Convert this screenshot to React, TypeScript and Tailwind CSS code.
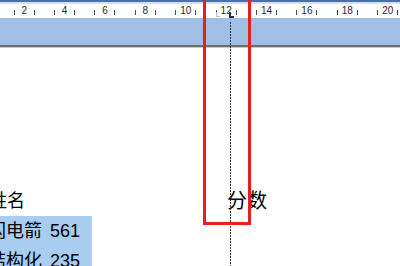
import React from 'react';

const labels = [2, 4, 6, 8, 10, 12, 14, 16, 18, 20];

const Tick: React.FC = () => <span className="mt-[2px] h-[5px] w-px bg-[#4a4a4a]" />;

const Ruler: React.FC = () => {
  return (
    <div className="relative flex h-[14px] items-center bg-white pl-[4px]">
      {labels.map((n) => (
        <div key={n} className="flex w-[40.4px] shrink-0 items-center justify-center">
          <Tick />
          <span className="w-[19px] text-center text-[10px] leading-[12px] text-[#2a2a2a]">{n}</span>
          <Tick />
        </div>
      ))}
      {/* tab markers */}
      <span className="absolute left-[216px] top-[8px] h-[5px] w-[4px] border-b border-l border-[#b8c4d4]" />
      <span className="absolute left-[229px] top-[8px] h-[6px] w-[5px] border-b-2 border-l-2 border-[#1f2f55]" />
    </div>
  );
};

const Row: React.FC<{ name: string; score: string }> = ({ name, score }) => (
  <div className="w-[92px] overflow-hidden whitespace-nowrap bg-[#a9ccf1]">
    <span className="-ml-[12px] inline-flex">
      <span>{name}</span>
      <span className="ml-[8px]">{score}</span>
    </span>
  </div>
);

const App: React.FC = () => {
  return (
    <div className="relative h-[266px] w-[400px] overflow-hidden bg-white font-['Liberation_Sans','Noto_Sans_CJK_SC',sans-serif]">
      <div className="h-[2px] bg-[#4a6fb0]" />
      <div className="h-[2px] bg-[#d3e0f2]" />
      <Ruler />
      <div className="h-[27px] bg-[#a0bfe7]" />
      <div className="h-[2px] bg-[#6f6f6f]" />
      <div className="h-px bg-[#c9c9c9]" />

      <div className="pt-[138px] text-[18px] leading-[30px] text-black">
        <div className="flex items-center">
          <span className="-ml-[11px] w-[238px]">姓名</span>
          <span className="text-[20px]">分数</span>
        </div>
        <Row name="闪电箭" score="561" />
        <Row name="结构化" score="235" />
      </div>

      {/* tab stop guide */}
      <div className="absolute bottom-0 left-[230px] top-[22px] w-px bg-[repeating-linear-gradient(to_bottom,#333_0_2px,transparent_2px_3px)]" />

      {/* red highlight frame */}
      <div className="absolute left-[203px] top-[-4px] h-[229px] w-[48px] border-[3px] border-[#ee1c1c]" />
    </div>
  );
};

export default App;
